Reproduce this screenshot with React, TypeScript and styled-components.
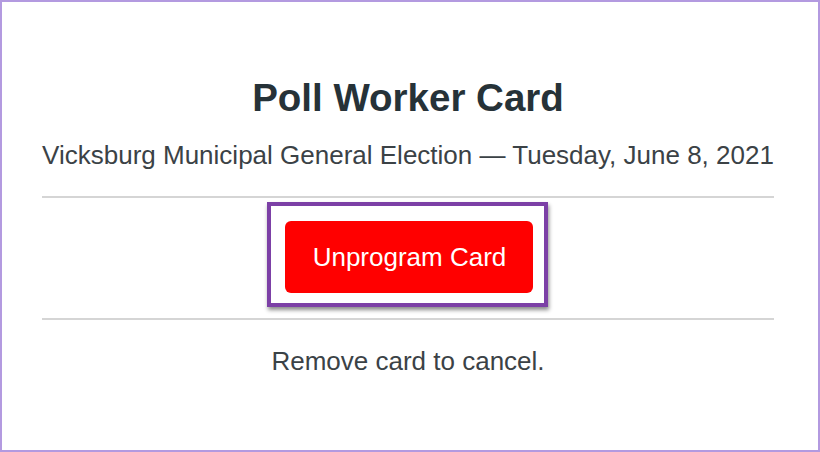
import React from "react";
import styled, { createGlobalStyle } from "styled-components";

const Global = createGlobalStyle`
  html, body { margin: 0; padding: 0; background: #ffffff; }
  body { font-family: "Liberation Sans", Arial, Helvetica, sans-serif; }
  * { box-sizing: border-box; }
`;

const Frame = styled.div`
  width: 820px;
  height: 452px;
  border: 2px solid #b39ae0;
  background: #ffffff;
  display: flex;
  justify-content: center;
  align-items: flex-start;
  padding-top: 72px;
  padding-right: 4px;
`;

const Content = styled.div`
  display: inline-flex;
  flex-direction: column;
  align-items: stretch;
  text-align: center;
`;

const Title = styled.h1`
  margin: 0;
  font-size: 38.5px;
  font-weight: 700;
  color: #263238;
  line-height: 48px;
`;

const Subtitle = styled.p`
  margin: 18px 0 0;
  font-size: 26px;
  color: #3b4246;
  line-height: 30px;
  white-space: nowrap;
`;

const Rule = styled.hr<{ $top: number }>`
  margin: ${(p) => p.$top}px 0 0;
  border: none;
  border-top: 2px solid #d5d5d5;
  height: 0;
`;

const FocusWrap = styled.div`
  display: flex;
  justify-content: center;
  margin-top: 4px;
`;

const FocusBox = styled.div`
  border: 4px solid #7c40a6;
  padding: 15px 11px 10px 14px;
  box-shadow: 1px 3px 4px rgba(0, 0, 0, 0.45);
  background: #ffffff;
`;

const DangerButton = styled.button`
  display: block;
  width: 248px;
  height: 72px;
  border: none;
  border-radius: 6px;
  background: #ff0000;
  color: #ffffff;
  font-family: "Liberation Sans", Arial, Helvetica, sans-serif;
  font-size: 26px;
  cursor: pointer;
`;

const Note = styled.p`
  margin: 26px 0 0;
  font-size: 26px;
  color: #3b4246;
  line-height: 30px;
`;

export default function App() {
  return (
    <>
      <Global />
      <Frame>
        <Content>
          <Title>Poll Worker Card</Title>
          <Subtitle>Vicksburg Municipal General Election — Tuesday, June 8, 2021</Subtitle>
          <Rule $top={26} />
          <FocusWrap>
            <FocusBox>
              <DangerButton>Unprogram Card</DangerButton>
            </FocusBox>
          </FocusWrap>
          <Rule $top={11} />
          <Note>Remove card to cancel.</Note>
        </Content>
      </Frame>
    </>
  );
}
